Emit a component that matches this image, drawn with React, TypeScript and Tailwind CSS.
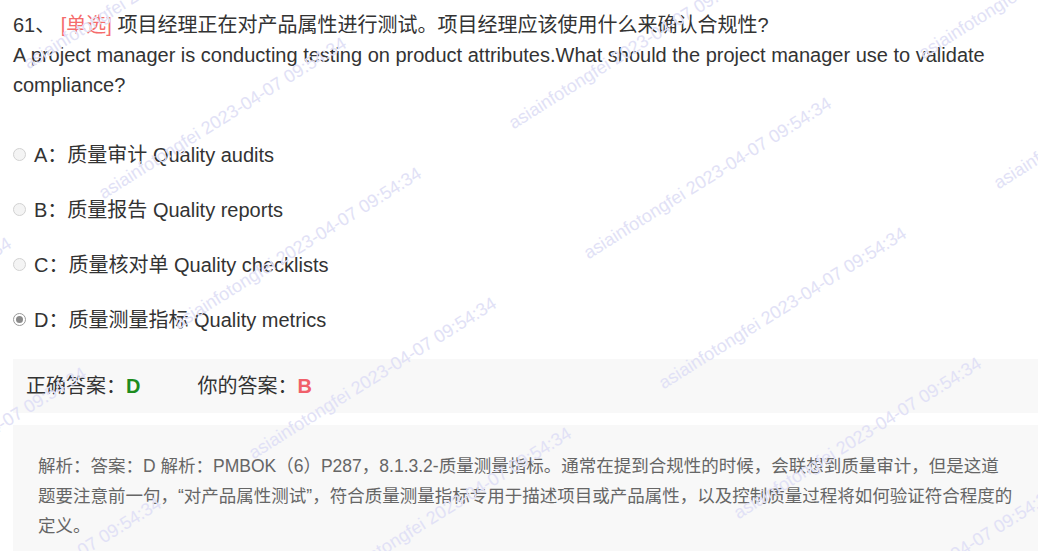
const options = [
  { key: "A", cn: "质量审计", en: "Quality audits", checked: false },
  { key: "B", cn: "质量报告", en: "Quality reports", checked: false },
  { key: "C", cn: "质量核对单", en: "Quality checklists", checked: false },
  { key: "D", cn: "质量测量指标", en: "Quality metrics", checked: true },
];

const Radio = ({ checked }: { checked: boolean }) => {
  if (checked) {
    return (
      <span className="w-[13px] h-[13px] rounded-full border border-[#9a9a9a] bg-white flex items-center justify-center shrink-0">
        <span className="w-[7px] h-[7px] rounded-full bg-[#8a8a8a]" />
      </span>
    );
  }
  return <span className="w-[13px] h-[13px] rounded-full border border-[#d2d2d2] bg-[#f4f4f4] shrink-0" />;
};

const Watermarks = () => {
  const marks: { x: number; y: number }[] = [];
  for (let j = -2; j <= 3; j++) {
    for (let i = -2; i <= 6; i++) {
      const x = 105 + 75 * i + 410 * j;
      const y = 200 + 130 * i - 70 * j;
      if (x > -320 && x < 1060 && y > -20 && y < 720) marks.push({ x, y });
    }
  }
  return (
    <div className="absolute inset-0 overflow-hidden pointer-events-none">
      {marks.map((m, k) => (
        <span
          key={k}
          className="absolute whitespace-nowrap text-[18px] leading-[18px] text-[#e1e1f6] origin-bottom-left -rotate-[32deg]"
          style={{ left: m.x, top: m.y - 16 }}
        >
          asiainfotongfei 2023-04-07 09:54:34
        </span>
      ))}
    </div>
  );
};

export default function App() {
  return (
    <div
      className="relative w-full h-[551px] overflow-hidden bg-white"
      style={{ fontFamily: '"Liberation Sans", Arial, "Noto Sans CJK SC", sans-serif' }}
    >
      <div className="pl-[13px] pt-[10px]">
        <div className="text-[20px] leading-[30px] text-[#333] pr-[40px]">
          61、 <span className="text-[#f56c6c]">[单选]</span> 项目经理正在对产品属性进行测试。项目经理应该使用什么来确认合规性?
          <br />
          A project manager is conducting testing on product attributes.What should the project manager use to validate compliance?
        </div>

        <div className="mt-[27px] flex flex-col">
          {options.map((o) => (
            <div key={o.key} className="h-[55px] flex items-center gap-[8px] text-[20px] text-[#333]">
              <Radio checked={o.checked} />
              <span>
                {o.key}：{o.cn} {o.en}
              </span>
            </div>
          ))}
        </div>

        <div className="mt-[12px] h-[54px] bg-[#f8f8f8] flex items-center pl-[13px] text-[20px] text-[#333]">
          <span>正确答案：</span>
          <span className="font-bold text-[#1e8c1e]">D</span>
          <span className="ml-[57px]">你的答案：</span>
          <span className="font-bold text-[#f0606a]">B</span>
        </div>

        <div className="mt-[12px] bg-[#f8f8f8] pl-[25px] pr-[4px] pt-[26px] pb-[20px] text-[17.5px] leading-[30px] text-[#666]">
          解析：答案：D 解析：PMBOK（6）P287，8.1.3.2-质量测量指标。通常在提到合规性的时候，会联想到质量审计，但是这道
          <br />
          题要注意前一句，“对产品属性测试”，符合质量测量指标专用于描述项目或产品属性，以及控制质量过程将如何验证符合程度的
          <br />
          定义。
        </div>
      </div>
      <Watermarks />
    </div>
  );
}
